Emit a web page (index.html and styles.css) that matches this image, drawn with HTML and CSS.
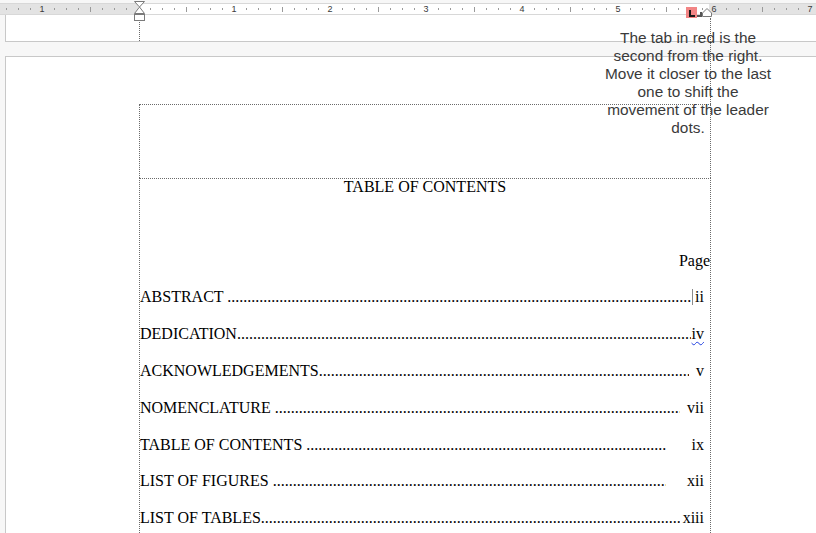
FILE: index.html
```html
<!DOCTYPE html>
<html>
<head>
<meta charset="utf-8">
<link rel="stylesheet" href="styles.css">
</head>
<body>
<div class="app">
  <div class="ruler">
    <i class="d"></i><i class="d"></i><i class="d"></i><b>1</b><i class="d"></i><i class="d"></i><i class="d"></i><i class="t"></i><i class="d"></i><i class="d"></i><i class="d"></i><i class="z"></i>
    <i class="d"></i><i class="d"></i><i class="d"></i><i class="t"></i><i class="d"></i><i class="d"></i><i class="d"></i><b>1</b>
    <i class="d"></i><i class="d"></i><i class="d"></i><i class="t"></i><i class="d"></i><i class="d"></i><i class="d"></i><b>2</b>
    <i class="d"></i><i class="d"></i><i class="d"></i><i class="t"></i><i class="d"></i><i class="d"></i><i class="d"></i><b>3</b>
    <i class="d"></i><i class="d"></i><i class="d"></i><i class="t"></i><i class="d"></i><i class="d"></i><i class="d"></i><b>4</b>
    <i class="d"></i><i class="d"></i><i class="d"></i><i class="t"></i><i class="d"></i><i class="d"></i><i class="d"></i><b>5</b>
    <i class="d"></i><i class="d"></i><i class="d"></i><i class="t"></i><i class="d"></i><i class="d"></i><i class="d"></i><b>6</b>
    <i class="d"></i><i class="d"></i><i class="d"></i><i class="t"></i><i class="d"></i><i class="d"></i><i class="d"></i><b>7</b>
  </div>

  <svg class="indent-marker" width="13" height="22" viewBox="0 0 13 22">
    <polygon points="1.5,1.5 11.5,1.5 6.5,7" fill="#fff" stroke="#7a7a7a" stroke-width="1"/>
    <polygon points="6.5,7 1.5,13.5 11.5,13.5" fill="#fff" stroke="#7a7a7a" stroke-width="1"/>
    <rect x="1.5" y="14.5" width="10" height="6" fill="#fff" stroke="#7a7a7a" stroke-width="1"/>
  </svg>

  <svg class="tab-markers" width="28" height="14" viewBox="0 0 28 14">
    <rect x="0" y="0" width="11" height="11" fill="#f28585"/>
    <rect x="3" y="3" width="2" height="7" fill="#1a1a1a"/>
    <rect x="3" y="8" width="6" height="2" fill="#1a1a1a"/>
    <rect x="14" y="5" width="2" height="5" fill="#555"/>
    <rect x="11" y="8" width="5" height="2" fill="#555"/>
    <polygon points="16.5,9.5 16.5,6 21,1.5 25.5,6 25.5,9.5" fill="#fff" stroke="#7a7a7a" stroke-width="1"/>
  </svg>

  <div class="prev-page">
    <div class="prev-margin"></div>
  </div>

  <div class="page">
    <div class="hdr"></div>
    <div class="doc">
      <div class="line title">TABLE OF CONTENTS</div>
      <div class="line"></div>
      <div class="line page-label">Page</div>

      <div class="line entry">
        <span class="label">ABSTRACT </span><span class="leader"></span><span class="num w19"><span class="caret"></span>ii</span>
      </div>
      <div class="line entry">
        <span class="label">DEDICATION</span><span class="leader"></span><span class="num w19"><span class="squiggle">iv</span></span>
      </div>
      <div class="line entry">
        <span class="label">ACKNOWLEDGEMENTS</span><span class="leader"></span><span class="num w21">v</span>
      </div>
      <div class="line entry">
        <span class="label">NOMENCLATURE </span><span class="leader"></span><span class="num w30">vii</span>
      </div>
      <div class="line entry">
        <span class="label">TABLE OF CONTENTS </span><span class="leader"></span><span class="num w44">ix</span>
      </div>
      <div class="line entry">
        <span class="label">LIST OF FIGURES </span><span class="leader"></span><span class="num w44">xii</span>
      </div>
      <div class="line entry">
        <span class="label">LIST OF TABLES</span><span class="leader"></span><span class="num w30">xiii</span>
      </div>
    </div>
  </div>

  <div class="guide"></div>

  <div class="note">The tab in red is the<br>second from the right.<br>Move it closer to the last<br>one to shift the<br>movement of the leader<br>dots.</div>
</div>
</body>
</html>
```

FILE: styles.css
```css
html, body {
  margin: 0;
  padding: 0;
  overflow: hidden;
  width: 816px;
  height: 533px;
}

body {
  background: #f7f7f7;
  font-family: "Liberation Serif", "Times New Roman", serif;
}

.app {
  position: relative;
  width: 816px;
  height: 533px;
  overflow: hidden;
}

/* ---------- ruler ---------- */
.ruler {
  margin-top: 3px;
  height: 10px;
  border-top: 1px solid #d8d8d8;
  border-bottom: 1px solid #d8d8d8;
  display: flex;
  background: linear-gradient(to right, #e3e3e3 138px, #ffffff 138px, #ffffff 709px, #e3e3e3 709px);
}

.ruler > i,
.ruler > b {
  flex: 0 0 12px;
  height: 10px;
  display: flex;
  justify-content: center;
  align-items: center;
}

.ruler > .d::before {
  content: "";
  width: 1px;
  height: 2px;
  background: #9a9a9a;
}

.ruler > .t::before {
  content: "";
  width: 1px;
  height: 5px;
  background: #9a9a9a;
}

.ruler > b {
  font-family: "Liberation Sans", Arial, sans-serif;
  font-weight: normal;
  font-size: 9px;
  line-height: 10px;
  color: #3a3a3a;
}

.indent-marker {
  position: absolute;
  left: 133px;
  top: 0;
}

.tab-markers {
  position: absolute;
  left: 686px;
  top: 7px;
}

/* ---------- previous page bottom ---------- */
.prev-page {
  margin-left: 5px;
  background: #ffffff;
  border-left: 1px solid #c8c8c8;
  border-bottom: 1px solid #c8c8c8;
  padding: 7px 0 0 133px;
  box-sizing: border-box;
  height: 27px;
}

.prev-margin {
  height: 19px;
  border-left: 1px dotted #6a6a6a;
}

/* ---------- page ---------- */
.page {
  margin-top: 14px;
  margin-left: 5px;
  background: #ffffff;
  border-left: 1px solid #c8c8c8;
  border-top: 1px solid #c8c8c8;
  padding: 47px 0 0 133px;
  height: 600px;
}

.hdr {
  width: 570px;
  height: 73px;
  border: 1px dotted #6a6a6a;
  border-bottom: none;
}

.doc {
  width: 570px;
  height: 500px;
  border: 1px dotted #6a6a6a;
  border-bottom: none;
  font-size: 16px;
  color: #000;
}

.line {
  height: 36.8px;
  line-height: 16px;
}

.title {
  text-align: center;
}

.page-label {
  text-align: right;
}

.entry {
  display: flex;
  align-items: flex-start;
}

.label {
  white-space: pre;
  flex: none;
}

.leader {
  flex: 1 1 0;
  overflow: hidden;
  white-space: nowrap;
  min-width: 0;
}

.leader::before {
  content: "................................................................................................................................................................................";
}

.num {
  flex: none;
  text-align: right;
  padding-right: 6px;
  box-sizing: border-box;
  white-space: nowrap;
}

.w19 { width: 19px; }
.w21 { width: 21px; }
.w30 { width: 30px; }
.w44 { width: 44px; }

.caret {
  display: inline-block;
  width: 1px;
  height: 16px;
  background: #8a8a8a;
  margin-right: 2px;
  vertical-align: -3px;
}

.squiggle {
  text-decoration: underline wavy #1f3fe0;
  text-decoration-thickness: 1px;
  text-underline-offset: 2px;
}

/* ---------- overlays ---------- */
.guide {
  position: absolute;
  left: 710px;
  top: 18px;
  height: 86px;
  border-left: 1px dotted #6a6a6a;
}

.note {
  position: absolute;
  left: 598px;
  top: 29px;
  width: 180px;
  text-align: center;
  font-family: "Liberation Sans", Arial, sans-serif;
  font-size: 15.4px;
  line-height: 18px;
  color: #3a3a3a;
  white-space: nowrap;
}
```
